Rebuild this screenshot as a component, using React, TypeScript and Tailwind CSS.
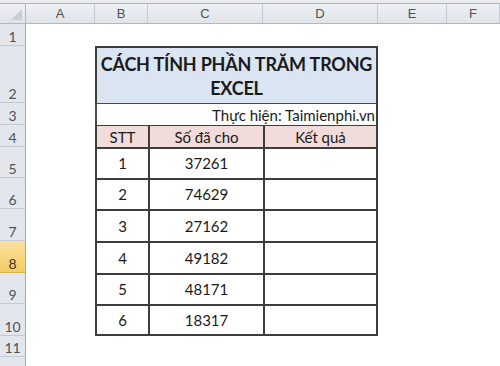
import React from "react";

const cols = ["A", "B", "C", "D", "E", "F"];
const colStart = ["col-start-2", "col-start-3", "col-start-4", "col-start-5", "col-start-6", "col-start-7"];
const rowStart = [
  "row-start-2",
  "row-start-3",
  "row-start-4",
  "row-start-5",
  "row-start-6",
  "row-start-7",
  "row-start-8",
  "row-start-9",
  "row-start-10",
  "row-start-11",
  "row-start-12",
  "row-start-13",
];

const data = [
  ["1", "37261"],
  ["2", "74629"],
  ["3", "27162"],
  ["4", "49182"],
  ["5", "48171"],
  ["6", "18317"],
];

export default function App() {
  return (
    <div className="w-[500px] h-[366px] overflow-hidden bg-white font-['Lato','Liberation_Sans',sans-serif] text-[#1a1a1a]">
      <div className="h-[3px] bg-[#e9ebee]" />
      <div className="grid grid-cols-[26px_69px_53px_115px_115px_69px_1fr] grid-rows-[21px_22px_57px_22px_22px_31px_31px_32px_32px_31px_32px_21px_30px]">
        {/* corner */}
        <div className="col-start-1 row-start-1 border-t border-r border-b border-[#aeb8c5] bg-gradient-to-b from-[#eef1f5] to-[#dfe4ea] relative">
          <svg className="absolute right-[3px] bottom-[3px]" width="11" height="11" viewBox="0 0 11 11">
            <polygon points="11,0 11,11 0,11" fill="#c9ced6" />
          </svg>
        </div>
        {cols.map((c, i) => (
          <div
            key={c}
            className={`${colStart[i]} row-start-1 border-t border-r border-b border-t-[#aeb8c5] border-r-[#c3cad4] border-b-[#aeb8c5] bg-gradient-to-b from-[#eef1f5] to-[#dfe4ea] flex items-center justify-center text-[13px] text-[#4d5156] font-['Liberation_Sans',sans-serif]`}
          >
            {c}
          </div>
        ))}
        {/* row headers */}
        {Array.from({ length: 12 }, (_, i) => (
          <div
            key={i}
            className={`col-start-1 ${rowStart[i]} border-r border-b ${
              i === 7
                ? "bg-gradient-to-b from-[#fbe09c] to-[#f5cc64] border-b-[#d9b04e] text-[#3f3413]"
                : "bg-[#e3e7ed] border-b-[#c3cad4] text-[#4d5156]"
            } border-r-[#9eabbb] flex items-end justify-center pb-[1px] text-[14px] leading-none overflow-hidden`}
          >
            {i + 1}
          </div>
        ))}

        {/* table B2:D10 */}
        <div className="col-start-3 col-end-6 row-start-3 row-end-12 border-r-2 border-b-2 border-[#3d3d3d] grid grid-cols-[53px_115px_1fr] grid-rows-[57px_22px_22px_31px_31px_32px_32px_31px_1fr] text-[15px]">
          <div className="col-span-3 border-l-2 border-t-2 border-[#3d3d3d] bg-[#dbe5f1] flex flex-col items-center justify-center text-center font-bold text-[18px] leading-[24px] pt-[1px] whitespace-nowrap tracking-[-0.2px]">
            <span>CÁCH TÍNH PHẦN TRĂM TRONG</span>
            <span>EXCEL</span>
          </div>
          <div className="col-span-3 border-l-2 border-t-[1.5px] border-[#4a4a4a] flex items-end justify-end pr-[1px] pb-[1px] leading-[18px]">
            Thực hiện: Taimienphi.vn
          </div>
          {["STT", "Số đã cho", "Kết quả"].map((h) => (
            <div
              key={h}
              className="border-l-2 border-t-[1.5px] border-[#3d3d3d] bg-[#f2dcdb] flex items-end justify-center pb-[1px] leading-[18px]"
            >
              {h}
            </div>
          ))}
          {data.map(([a, b]) => (
            <React.Fragment key={a}>
              <div className="border-l-2 border-t-2 border-[#3d3d3d] flex items-center justify-center">{a}</div>
              <div className="border-l-2 border-t-2 border-[#3d3d3d] flex items-center justify-center">{b}</div>
              <div className="border-l-2 border-t-2 border-[#3d3d3d]" />
            </React.Fragment>
          ))}
        </div>
      </div>
    </div>
  );
}
